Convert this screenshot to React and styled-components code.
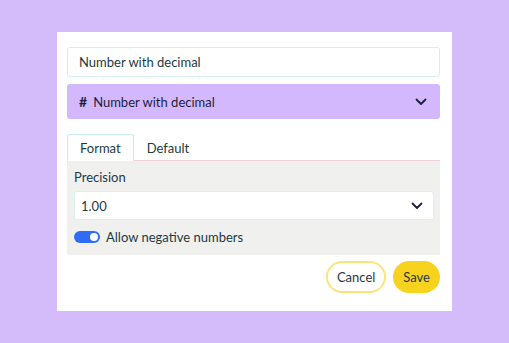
import React from "react";
import styled, { createGlobalStyle } from "styled-components";

const Global = createGlobalStyle`
  html, body { margin: 0; padding: 0; }
  body {
    background: #d4bcfb;
    font-family: "Lato", "Noto Sans", sans-serif;
    color: #1e3b3f;
  }
`;

const Page = styled.div`
  width: 509px;
  height: 343px;
  padding: 32px 57px;
  box-sizing: border-box;
`;

const Card = styled.div`
  background: #ffffff;
  width: 395px;
  height: 279px;
  box-sizing: border-box;
  padding: 15px 12px 0 10px;
  display: flex;
  flex-direction: column;
`;

const TextInput = styled.div`
  height: 30px;
  border: 1px solid #d6eeee;
  border-radius: 3px;
  box-sizing: border-box;
  display: flex;
  align-items: center;
  padding: 0 11px;
  font-size: 13px;
  color: #1e3b3f;
`;

const TypeSelect = styled.div`
  margin-top: 7px;
  height: 35px;
  background: #d3b8fd;
  border-radius: 3px;
  display: flex;
  align-items: center;
  padding: 0 13px 0 12px;
  font-size: 13px;
  color: #1c1f3d;
`;

const Hash = styled.span`
  font-weight: 700;
  font-size: 14px;
  margin-right: 6px;
`;

const Grow = styled.span`
  flex: 1;
`;

const Tabs = styled.div`
  margin-top: 15px;
  display: flex;
  align-items: flex-end;
  border-bottom: 1px solid #f2cfd6;
  height: 26px;
`;

const Tab = styled.div`
  box-sizing: border-box;
  padding: 0 12px;
  display: flex;
  align-items: center;
  font-size: 13px;
  color: #1e3b3f;
  border: 1px solid ${(p) => (p.$active ? "#c9ecec" : "transparent")};
  border-bottom: none;
  border-radius: 3px 3px 0 0;
  background: ${(p) => (p.$active ? "#ffffff" : "transparent")};
  margin-bottom: ${(p) => (p.$active ? "-1px" : "0")};
  height: ${(p) => (p.$active ? "27px" : "26px")};
`;

const Panel = styled.div`
  background: #f0f0ef;
  padding: 8px 6px 10px 7px;
  display: flex;
  flex-direction: column;
`;

const Label = styled.div`
  font-size: 13px;
  color: #1e3b3f;
`;

const NumberSelect = styled.div`
  margin-top: 6px;
  height: 29px;
  background: #ffffff;
  border: 1px solid #ddf0f0;
  border-radius: 3px;
  box-sizing: border-box;
  display: flex;
  align-items: center;
  padding: 0 10px 0 6px;
  font-size: 13px;
  color: #1e3b3f;
`;

const NumberText = styled.span`
  flex: 1;
`;

const ToggleRow = styled.div`
  margin-top: 9px;
  display: flex;
  align-items: center;
  gap: 6px;
  font-size: 13px;
  color: #1e3b3f;
`;

const Toggle = styled.div`
  width: 26px;
  height: 12px;
  border-radius: 6px;
  background: #2f6cf5;
  position: relative;
  &::after {
    content: "";
    position: absolute;
    right: 2px;
    top: 2px;
    width: 8px;
    height: 8px;
    border-radius: 50%;
    background: #fff;
  }
`;

const Footer = styled.div`
  margin-top: 6px;
  display: flex;
  justify-content: flex-end;
  gap: 7px;
`;

const Button = styled.button`
  height: 32px;
  border-radius: 16px;
  font-family: inherit;
  font-size: 13px;
  color: #1e3b3f;
  padding: 0 ${(p) => (p.$primary ? "8px" : "9px")};
  border: 2px solid ${(p) => (p.$primary ? "#f8d31e" : "#fbe47c")};
  background: ${(p) => (p.$primary ? "#f8d31e" : "#ffffff")};
  cursor: pointer;
`;

const Chevron = () => (
  <svg width="12" height="8" viewBox="0 0 12 8" fill="none">
    <path d="M1.5 1.5 L6 6 L10.5 1.5" stroke="#1c1f3d" strokeWidth="1.8" strokeLinecap="round" strokeLinejoin="round" />
  </svg>
);

export default function App() {
  return (
    <Page>
      <Global />
      <Card>
        <TextInput>Number with decimal</TextInput>
        <TypeSelect>
          <Hash>#</Hash>
          <Grow>Number with decimal</Grow>
          <Chevron />
        </TypeSelect>
        <Tabs>
          <Tab $active>Format</Tab>
          <Tab>Default</Tab>
        </Tabs>
        <Panel>
          <Label>Precision</Label>
          <NumberSelect>
            <NumberText>1.00</NumberText>
            <Chevron />
          </NumberSelect>
          <ToggleRow>
            <Toggle />
            Allow negative numbers
          </ToggleRow>
        </Panel>
        <Footer>
          <Button>Cancel</Button>
          <Button $primary>Save</Button>
        </Footer>
      </Card>
    </Page>
  );
}
